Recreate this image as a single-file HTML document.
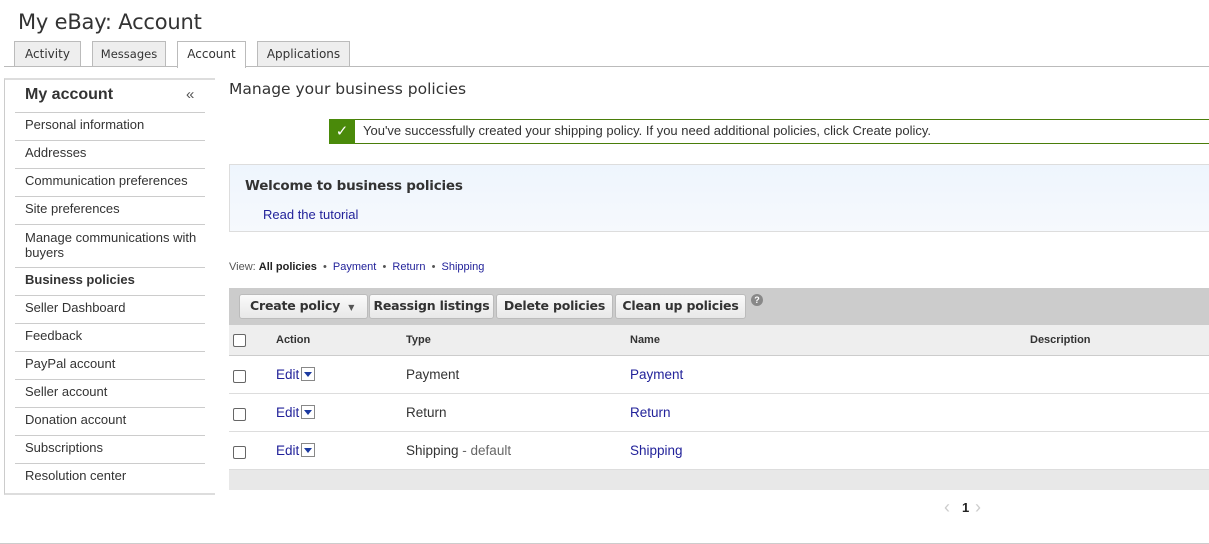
<!DOCTYPE html>
<html><head><style>
*{margin:0;padding:0;box-sizing:border-box}
body{width:1209px;height:544px;position:relative;background:#fff;font-family:"Liberation Sans",Arial,sans-serif;color:#333;overflow:hidden}
.a{position:absolute}
.ds{font-family:"DejaVu Sans",Verdana,sans-serif}
.tab{position:absolute;top:41px;height:26px;border:1px solid #bbb;border-bottom:none;background:#eee;font-size:12px;text-align:center;line-height:24px;color:#333}
.side div.i{position:absolute;left:15px;width:190px;border-top:1px solid #ccc;font-size:13px;padding-left:10px;color:#333}
.blue{color:#22229a}
.btn{position:absolute;top:294px;height:25px;border:1px solid #bbb;border-radius:3px;background:linear-gradient(#fafafa,#e8e8e8);font-size:12.5px;font-weight:bold;line-height:22px;text-align:center;color:#333;white-space:nowrap;letter-spacing:-0.2px}
.row{position:absolute;left:229px;width:980px;height:38px;border-bottom:1px solid #ddd;font-size:13.5px}
.row span{position:absolute;top:11px}
.cb{position:absolute;left:4px;width:13px;height:13px;border:1px solid #666;border-radius:2px;background:#fff}
.dd{display:inline-block;width:14px;height:14px;border:1px solid #888;vertical-align:-2px;margin-left:2px;position:relative}
.dd:after{content:"";position:absolute;left:2px;top:4px;border:4px solid transparent;border-top:5px solid #1c3aa0}
</style></head><body>
<div class="a ds" style="left:18px;top:10px;font-size:21px;color:#333;letter-spacing:-0.2px">My eBay: Account</div>
<div class="tab ds" style="left:14px;width:67px">Activity</div>
<div class="tab ds" style="left:92px;width:74px;font-size:11.5px">Messages</div>
<div class="tab ds" style="left:177px;width:69px;background:#fff;height:27px;z-index:2">Account</div>
<div class="tab ds" style="left:257px;width:93px">Applications</div>
<div class="a" style="left:4px;top:66px;width:1205px;height:1px;background:#bbb"></div>

<div class="a side" style="left:4px;top:78px;width:211px;height:417px;border-left:1px solid #ccc;border-top:2px solid #ddd;border-bottom:2px solid #ddd">
<div class="a" style="left:20px;top:6px;font-size:16px;font-weight:bold;color:#333">My account</div>
<div class="a" style="left:181px;top:6px;font-size:15px;color:#555">«</div>
</div>
<div class="side">
<div class="i" style="top:112px;height:28px;line-height:24px">Personal information</div>
<div class="i" style="top:140px;height:28px;line-height:24px">Addresses</div>
<div class="i" style="top:168px;height:28px;line-height:24px">Communication preferences</div>
<div class="i" style="top:196px;height:28px;line-height:24px">Site preferences</div>
<div class="i" style="top:224px;height:43px;line-height:15px;padding-top:5px">Manage communications with buyers</div>
<div class="i" style="top:267px;height:28px;line-height:24px;font-weight:bold">Business policies</div>
<div class="i" style="top:295px;height:28px;line-height:24px">Seller Dashboard</div>
<div class="i" style="top:323px;height:28px;line-height:24px">Feedback</div>
<div class="i" style="top:351px;height:28px;line-height:24px">PayPal account</div>
<div class="i" style="top:379px;height:28px;line-height:24px">Seller account</div>
<div class="i" style="top:407px;height:28px;line-height:24px">Donation account</div>
<div class="i" style="top:435px;height:28px;line-height:24px">Subscriptions</div>
<div class="i" style="top:463px;height:28px;line-height:24px">Resolution center</div>
</div>

<div class="a ds" style="left:229px;top:80px;font-size:15.5px;color:#333">Manage your business policies</div>
<div class="a" style="left:329px;top:119px;width:880px;height:25px;border-top:1px solid #4a7d0a;border-bottom:1px solid #4a7d0a"></div>
<div class="a" style="left:329px;top:119px;width:26px;height:25px;background:#4a8a0a;color:#fff;text-align:center;font-size:15px;line-height:25px">✓</div>
<div class="a" style="left:363px;top:123px;font-size:13px;color:#333">You've successfully created your shipping policy. If you need additional policies, click Create policy.</div>

<div class="a" style="left:229px;top:164px;width:980px;height:68px;border-top:1px solid #ddd;border-bottom:1px solid #ddd;border-left:1px solid #ddd;background:linear-gradient(#eef5fd,#f6f9fd)"></div>
<div class="a ds" style="left:245px;top:178px;font-size:13.5px;font-weight:bold;color:#333;letter-spacing:-0.2px">Welcome to business policies</div>
<div class="a blue" style="left:263px;top:207px;font-size:13px">Read the tutorial</div>

<div class="a" style="left:229px;top:261px;font-size:11px;color:#555">View: <b style="color:#222">All policies</b> &nbsp;•&nbsp; <span class="blue">Payment</span> &nbsp;•&nbsp; <span class="blue">Return</span> &nbsp;•&nbsp; <span class="blue">Shipping</span></div>

<div class="a" style="left:229px;top:288px;width:980px;height:37px;background:#ccc"></div>
<div class="btn ds" style="left:239px;width:129px;text-align:left;padding-left:10px">Create policy <span style="font-size:8px;color:#555;margin-left:4px">▼</span></div>
<div class="btn ds" style="left:369px;width:125px">Reassign listings</div>
<div class="btn ds" style="left:496px;width:117px">Delete policies</div>
<div class="btn ds" style="left:615px;width:131px">Clean up policies</div>
<div class="a" style="left:751px;top:294px;width:12px;height:12px;border-radius:6px;background:#888;color:#fff;font-size:9px;text-align:center;line-height:12px;font-weight:bold">?</div>

<div class="row" style="top:325px;height:31px;background:#eee;font-size:11px;font-weight:bold;border-bottom:1px solid #ccc">
<div class="cb" style="top:9px"></div>
<span style="left:47px;top:9px">Action</span><span style="left:177px;top:9px">Type</span><span style="left:401px;top:9px">Name</span><span style="left:801px;top:9px">Description</span></div>
<div class="row" style="top:356px"><div class="cb" style="top:14px"></div><span class="blue" style="left:47px">Edit<i class="dd"></i></span><span style="left:177px">Payment</span><span class="blue" style="left:401px">Payment</span></div>
<div class="row" style="top:394px"><div class="cb" style="top:14px"></div><span class="blue" style="left:47px">Edit<i class="dd"></i></span><span style="left:177px">Return</span><span class="blue" style="left:401px">Return</span></div>
<div class="row" style="top:432px"><div class="cb" style="top:14px"></div><span class="blue" style="left:47px">Edit<i class="dd"></i></span><span style="left:177px">Shipping <span style="position:static;color:#666">- default</span></span><span class="blue" style="left:401px">Shipping</span></div>
<div class="a" style="left:229px;top:470px;width:980px;height:20px;background:#e8e8e8"></div>

<div class="a" style="left:944px;top:497px;font-size:18px;color:#ccc">‹</div>
<div class="a" style="left:962px;top:500px;font-size:13px;font-weight:bold;color:#222">1</div>
<div class="a" style="left:975px;top:497px;font-size:18px;color:#ccc">›</div>
<div class="a" style="left:0;top:543px;width:1209px;height:1px;background:#ccc"></div>
</body></html>
